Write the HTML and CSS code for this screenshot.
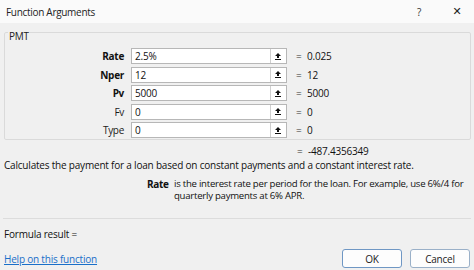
FILE: index.html
```html
<!DOCTYPE html>
<html lang="en">
<head>
<meta charset="utf-8">
<title>Function Arguments</title>
<link rel="stylesheet" href="styles.css">
</head>
<body>
<div class="dialog">
  <header class="titlebar">
    <span class="title">Function Arguments</span>
    <span class="help">?</span>
    <span class="close">&#x2715;</span>
  </header>
  <fieldset class="group">
    <legend class="legend">PMT</legend>
    <div class="args">
      <label class="lbl">Rate</label>
      <div class="field"><span class="val">2.5%</span><span class="pick"><svg width="6" height="7" viewBox="0 0 6 7"><polygon points="3,0 0,3 2,3 2,5 4,5 4,3 6,3" fill="#111"/><rect x="0" y="6" width="6" height="1" fill="#111"/></svg></span></div>
      <span class="eq">=</span><span class="res">0.025</span>

      <label class="lbl">Nper</label>
      <div class="field"><span class="val">12</span><span class="pick"><svg width="6" height="7" viewBox="0 0 6 7"><polygon points="3,0 0,3 2,3 2,5 4,5 4,3 6,3" fill="#111"/><rect x="0" y="6" width="6" height="1" fill="#111"/></svg></span></div>
      <span class="eq">=</span><span class="res">12</span>

      <label class="lbl">Pv</label>
      <div class="field"><span class="val">5000</span><span class="pick"><svg width="6" height="7" viewBox="0 0 6 7"><polygon points="3,0 0,3 2,3 2,5 4,5 4,3 6,3" fill="#111"/><rect x="0" y="6" width="6" height="1" fill="#111"/></svg></span></div>
      <span class="eq">=</span><span class="res">5000</span>

      <label class="lbl optional">Fv</label>
      <div class="field"><span class="val">0</span><span class="pick"><svg width="6" height="7" viewBox="0 0 6 7"><polygon points="3,0 0,3 2,3 2,5 4,5 4,3 6,3" fill="#111"/><rect x="0" y="6" width="6" height="1" fill="#111"/></svg></span></div>
      <span class="eq">=</span><span class="res">0</span>

      <label class="lbl optional">Type</label>
      <div class="field"><span class="val">0</span><span class="pick"><svg width="6" height="7" viewBox="0 0 6 7"><polygon points="3,0 0,3 2,3 2,5 4,5 4,3 6,3" fill="#111"/><rect x="0" y="6" width="6" height="1" fill="#111"/></svg></span></div>
      <span class="eq">=</span><span class="res">0</span>
    </div>
  </fieldset>
  <div class="total"><span class="eq">=</span><span class="res">-487.4356349</span></div>
  <p class="desc">Calculates the payment for a loan based on constant payments and a constant interest rate.</p>
  <div class="argdesc">
    <span class="argname">Rate</span>
    <span class="argtext">is the interest rate per period for the loan. For example, use 6%/4 for quarterly payments at 6% APR.</span>
  </div>
  <hr class="sep">
  <div class="formula">Formula result =</div>
  <footer class="footer">
    <a class="helplink" href="#">Help on this function</a>
    <div class="buttons">
      <button class="btn ok">OK</button>
      <button class="btn">Cancel</button>
    </div>
  </footer>
</div>
</body>
</html>
```
FILE: styles.css
```css
* { box-sizing: border-box; }
html, body { margin: 0; padding: 0; }
body {
  width: 474px;
  height: 270px;
  overflow: hidden;
  background: #f0f0f0;
  font-family: "Open Sans", "Noto Sans", sans-serif;
  font-size: 10px;
  letter-spacing: -0.2px;
  line-height: 12px;
  color: #111;
}
.dialog { display: flex; flex-direction: column; height: 270px; }
.titlebar {
  height: 23px;
  background: #fafafa;
  display: flex;
  align-items: center;
  padding: 1px 11px 0 6px;
}
.title { letter-spacing: -0.3px; color: #222; flex: 1; }
.help { color: #333; width: 6px; text-align: center; }
.close {
  margin-left: 29px;
  width: 12px;
  text-align: center;
  font-family: "DejaVu Sans", sans-serif;
  font-size: 11px;
  color: #222;
  letter-spacing: 0;
}

.group {
  margin: 0 3px 0 4px;
  padding: 6px 0 1px 0;
  border: 1px solid #dadada;
  border-radius: 2px;
  min-width: 0;
}
.legend {
  margin-left: 3px;
  padding: 8px 1px 0 1px;
  line-height: 11px;
  letter-spacing: -0.3px;
  color: #222;
}
.args {
  display: grid;
  grid-template-columns: 126px 156px 20px auto;
  grid-auto-rows: 16px;
  row-gap: 2.6px;
  align-items: center;
}
.lbl {
  grid-column: 1;
  text-align: right;
  padding-right: 7px;
  font-weight: 700;
  letter-spacing: -0.3px;
}
.lbl.optional { font-weight: 400; color: #1a1a1a; }
.field {
  grid-column: 2;
  height: 16px;
  background: #fff;
  border: 1px solid #b7b7b7;
  display: flex;
  align-items: center;
}
.val { flex: 1; padding-left: 3px; }
.pick {
  width: 16px;
  height: 100%;
  border-left: 1px solid #cfcfcf;
  display: flex;
  align-items: center;
  justify-content: center;
  padding-right: 1px;
}
.pick svg { display: block; }
.eq { grid-column: 3; padding-left: 9px; color: #333; }
.res { grid-column: 4; }

.total {
  display: flex;
  padding-left: 297px;
  margin-top: 5px;
}
.total .eq { width: 11px; padding-left: 0; }
.desc {
  margin: 2px 0 0 0;
  padding-left: 4px;
}
.argdesc {
  display: flex;
  margin-top: 7px;
  padding-left: 147px;
}
.argname { font-weight: 700; width: 27px; flex: none; letter-spacing: -0.3px; }
.argtext { width: 300px; font-size: 9.6px; letter-spacing: -0.25px; }
.sep {
  margin: 16px 3px 0 3px;
  border: 0;
  border-top: 1px solid #dcdcdc;
  height: 0;
}
.formula {
  padding-left: 4px;
  margin-top: 9px;
}
.footer {
  display: flex;
  justify-content: space-between;
  align-items: center;
  padding: 0 4px;
  margin-top: 9px;
}
.helplink {
  color: #1a6fc9;
  text-decoration: underline;
}
.buttons { display: flex; gap: 8px; }
.btn {
  width: 60px;
  height: 19px;
  padding: 0;
  font-family: inherit;
  font-size: 10px;
  letter-spacing: -0.2px;
  color: #1b1b1b;
  background: #fdfdfd;
  border: 1px solid #9ab0c8;
  border-radius: 3px;
}
.btn.ok { border-color: #6f97c4; }
```
